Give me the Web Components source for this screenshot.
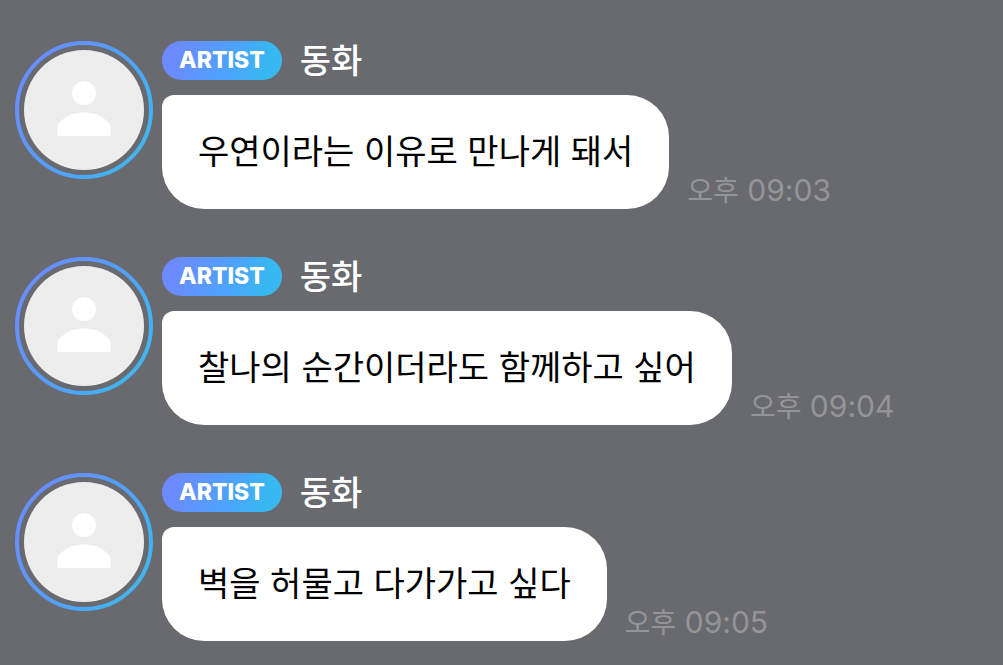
<!DOCTYPE html>
<html lang="ko">
<head>
<meta charset="utf-8">
<meta name="viewport" content="width=device-width, initial-scale=1">
<title>Chat</title>
<style>
  body { margin: 0; background: #696a6f; font-family: Inter, "Noto Sans CJK KR", sans-serif; }
</style>
</head>
<body>
<chat-thread>
  <chat-message name="동화" period="오후" time="09:03">우연이라는 이유로 만나게 돼서</chat-message>
  <chat-message name="동화" period="오후" time="09:04">찰나의 순간이더라도 함께하고 싶어</chat-message>
  <chat-message name="동화" period="오후" time="09:05">벽을 허물고 다가가고 싶다</chat-message>
</chat-thread>

<template id="thread">
  <style>
    :host { display: flex; flex-direction: column; gap: 48px; padding: 41px 15px 24px; }
  </style>
  <slot></slot>
</template>

<template id="avatar">
  <style>
    :host { display: block; flex: none; width: 138px; height: 138px; }
    svg { display: block; width: 100%; height: 100%; }
  </style>
  <svg viewBox="0 0 138 138" aria-hidden="true">
    <defs>
      <linearGradient id="ring" x1="0" y1="0.2" x2="1" y2="0.8">
        <stop offset="0" stop-color="#6b8bff"/>
        <stop offset="0.5" stop-color="#549ffb"/>
        <stop offset="1" stop-color="#3eb8ef"/>
      </linearGradient>
    </defs>
    <circle cx="69" cy="69" r="67" fill="none" stroke="url(#ring)" stroke-width="4"/>
    <circle cx="69" cy="69" r="60" fill="#ededed"/>
    <circle cx="69" cy="52" r="12" fill="#fff"/>
    <path d="M42.400 93V84.500C47.500 76.500 58 71.200 69 71.200S90.500 76.500 95.600 84.500V93q0 2-2 2H44.400q-2 0-2-2z" fill="#fff"/>
  </svg>
</template>

<template id="badge">
  <style>
    :host {
      display: block; box-sizing: border-box; height: 39px; padding: 0 17px; border-radius: 20px;
      background: linear-gradient(110deg, #6b8bff 15%, #4aa5fb 60%, #38b8f0 85%);
      color: #fff; font-size: 23px; font-weight: 800; line-height: 39px;
    }
  </style>
  <slot></slot>
</template>

<template id="message">
  <style>
    :host { display: flex; gap: 9px; align-items: flex-start; }
    .content { flex: 1; min-width: 0; }
    header { display: flex; align-items: center; gap: 18px; height: 39px; margin-bottom: 15px; }
    .name { color: #fff; font-size: 34px; font-weight: 500; line-height: 36px; }
    .line { display: flex; align-items: flex-end; gap: 18px; }
    .bubble {
      margin: 0; padding: 33px 36px; border-radius: 12px 42px 42px 42px;
      background: #fff; color: #000; font-size: 34px; line-height: 48px;
    }
    time { flex: none; color: #949599; font-size: 30px; line-height: 36px; }
    .period { font-size: 28px; }
  </style>
  <artist-avatar></artist-avatar>
  <div class="content">
    <header><artist-badge>ARTIST</artist-badge><span class="name"></span></header>
    <div class="line"><p class="bubble"><slot></slot></p><time><span class="period"></span> <span class="clock"></span></time></div>
  </div>
</template>

<script>
  class Templated extends HTMLElement {
    constructor() {
      super();
      const template = document.getElementById(this.constructor.template);
      this.attachShadow({ mode: "open" }).append(template.content.cloneNode(true));
    }
  }
  class ArtistAvatar extends Templated { static template = "avatar"; }
  class ArtistBadge extends Templated { static template = "badge"; }
  class ChatThread extends Templated { static template = "thread"; }
  class ChatMessage extends Templated {
    static template = "message";
    connectedCallback() {
      const fill = (selector, attribute) => {
        this.shadowRoot.querySelector(selector).textContent = this.getAttribute(attribute);
      };
      fill(".name", "name");
      fill(".period", "period");
      fill(".clock", "time");
    }
  }
  customElements.define("artist-avatar", ArtistAvatar);
  customElements.define("artist-badge", ArtistBadge);
  customElements.define("chat-message", ChatMessage);
  customElements.define("chat-thread", ChatThread);
</script>
</body>
</html>
